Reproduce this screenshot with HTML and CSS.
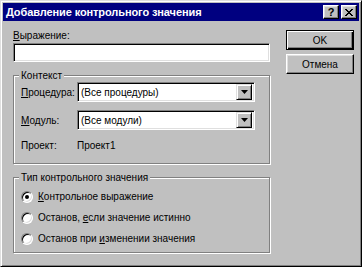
FILE: index.html
```html
<!DOCTYPE html>
<html lang="ru">
<head>
    <meta charset="UTF-8">
    <meta name="viewport" content="width=device-width, initial-scale=1.0">
    <title>Добавление контрольного значения</title>
    <link rel="stylesheet" href="styles.css">
</head>
<body>
    <div class="window">
        <div class="titlebar">
            <span class="title">Добавление контрольного значения</span>
            <div class="title-buttons">
                <span class="tbtn help">?</span>
                <span class="tbtn close">
                    <svg width="8" height="7" viewBox="0 0 8 7"><path d="M0 0h2v1h1v1h2v-1h1v-1h2v1h-1v1h-1v1h-1v1h1v1h1v1h1v1h-2v-1h-1v-1h-2v1h-1v1h-2v-1h1v-1h1v-1h1v-1h-1v-1h-1v-1h-1z" fill="#000"/></svg>
                </span>
            </div>
        </div>

        <div class="dialog">
            <div class="main">
                <label class="field-label"><u>В</u>ыражение:</label>
                <div class="textbox"></div>

                <fieldset class="group context">
                    <legend>Контекст</legend>
                    <div class="row">
                        <label class="row-label"><u>П</u>роцедура:</label>
                        <div class="combo">
                            <span class="combo-text">(Все процедуры)</span>
                            <span class="drop"><svg width="7" height="4" viewBox="0 0 7 4"><path d="M0 0h7l-3.5 4z" fill="#000"/></svg></span>
                        </div>
                    </div>
                    <div class="row">
                        <label class="row-label"><u>М</u>одуль:</label>
                        <div class="combo">
                            <span class="combo-text">(Все модули)</span>
                            <span class="drop"><svg width="7" height="4" viewBox="0 0 7 4"><path d="M0 0h7l-3.5 4z" fill="#000"/></svg></span>
                        </div>
                    </div>
                    <div class="row project">
                        <span class="row-label">Проект:</span>
                        <span>Проект1</span>
                    </div>
                </fieldset>

                <fieldset class="group type">
                    <legend>Тип контрольного значения</legend>
                    <div class="radio-row"><span class="radio checked"></span><span><u>К</u>онтрольное выражение</span></div>
                    <div class="radio-row"><span class="radio"></span><span>Останов, <u>е</u>сли значение истинно</span></div>
                    <div class="radio-row"><span class="radio"></span><span>Останов при <u>и</u>зменении значения</span></div>
                </fieldset>
            </div>

            <div class="buttons">
                <button class="btn default">OK</button>
                <button class="btn">Отмена</button>
            </div>
        </div>
    </div>
</body>
</html>
```

FILE: styles.css
```css
body {
    margin: 0;
    font-family: "Liberation Sans", Arial, sans-serif;
    font-size: 10px;
    color: #000;
    background-color: #c0c0c0;
}
u {
    text-decoration: underline;
    text-underline-offset: 1px;
}
.window {
    width: 362px;
    height: 267px;
    box-sizing: border-box;
    padding: 2px;
    background-color: #c0c0c0;
    border: 1px solid;
    border-color: #dfdfdf #000 #000 #dfdfdf;
    box-shadow: inset 1px 1px 0 #fff, inset -1px -1px 0 #808080;
}
.titlebar {
    height: 18px;
    background-color: #000080;
    display: flex;
    align-items: center;
    justify-content: space-between;
    padding: 0 2px 0 3px;
}
.title {
    color: #fff;
    font-weight: bold;
    font-size: 11px;
    letter-spacing: -0.1px;
}
.title-buttons {
    display: flex;
    gap: 2px;
}
.tbtn {
    width: 16px;
    height: 14px;
    box-sizing: border-box;
    display: flex;
    align-items: center;
    justify-content: center;
    background-color: #c0c0c0;
    border: 1px solid;
    border-color: #fff #000 #000 #fff;
    box-shadow: inset -1px -1px 0 #808080, inset 1px 1px 0 #dfdfdf;
    font-weight: bold;
    font-size: 11px;
    line-height: 12px;
}
.dialog {
    display: flex;
    padding: 8px 0 0 10px;
}
.main {
    width: 257px;
}
.field-label {
    display: block;
    line-height: 13px;
}
.textbox, .combo {
    box-sizing: border-box;
    background-color: #fff;
    border: 1px solid;
    border-color: #808080 #fff #fff #808080;
    box-shadow: inset 1px 1px 0 #000, inset -1px -1px 0 #dfdfdf;
}
.textbox {
    height: 19px;
    margin-top: 1px;
}
.group {
    margin: 0;
    padding: 0 8px 0 7px;
    border: 1px solid #808080;
    box-shadow: inset 1px 1px 0 #fff, 1px 1px 0 #fff;
}
.group legend {
    padding: 0 2px;
    margin-left: -2px;
    line-height: 13px;
    background-color: #c0c0c0;
}
.context {
    margin-top: 7px;
    padding-bottom: 11px;
}
.row {
    display: flex;
    align-items: center;
}
.row + .row {
    margin-top: 8px;
}
.row-label {
    width: 56px;
    flex-shrink: 0;
}
.combo {
    width: 178px;
    height: 20px;
    display: flex;
    align-items: center;
    justify-content: space-between;
    padding: 2px;
}
.combo-text {
    padding-left: 1px;
}
.drop {
    width: 16px;
    height: 16px;
    box-sizing: border-box;
    display: flex;
    align-items: center;
    justify-content: center;
    background-color: #c0c0c0;
    border: 1px solid;
    border-color: #dfdfdf #000 #000 #dfdfdf;
    box-shadow: inset 1px 1px 0 #fff, inset -1px -1px 0 #808080;
}
.row.project {
    margin-top: 9px;
    line-height: 13px;
}
.type {
    margin-top: 7px;
    padding-top: 2px;
    padding-bottom: 3px;
}
.radio-row {
    height: 21px;
    display: flex;
    align-items: center;
    gap: 5px;
}
.radio {
    width: 12px;
    height: 12px;
    box-sizing: border-box;
    border-radius: 50%;
    background-color: #fff;
    border: 1px solid;
    border-color: #808080 #fff #fff #808080;
    box-shadow: inset 1px 1px 0 #000, inset -1px -1px 0 #dfdfdf;
    display: flex;
    align-items: center;
    justify-content: center;
}
.radio.checked::after {
    content: "";
    width: 4px;
    height: 4px;
    border-radius: 50%;
    background-color: #000;
}
.buttons {
    display: flex;
    flex-direction: column;
    gap: 4px;
    margin-left: 16px;
    padding-top: 1px;
}
.btn {
    width: 68px;
    height: 20px;
    padding: 0;
    font-family: inherit;
    font-size: 10px;
    color: #000;
    background-color: #c0c0c0;
    border: 1px solid;
    border-color: #fff #000 #000 #fff;
    box-shadow: inset -1px -1px 0 #808080, inset 1px 1px 0 #dfdfdf;
}
.btn.default {
    border: 1px solid #000;
    box-shadow: inset 1px 1px 0 #fff, inset -1px -1px 0 #000, inset -2px -2px 0 #808080;
}
```
